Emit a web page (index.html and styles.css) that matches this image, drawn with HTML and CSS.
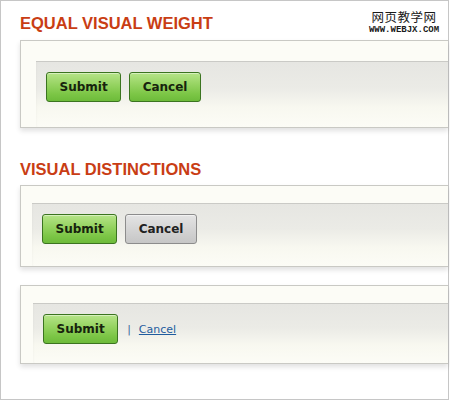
FILE: index.html
```html
<!DOCTYPE html>
<html>
<head>
<meta charset="utf-8">
<link rel="stylesheet" href="styles.css">
</head>
<body>
<div class="frame">
  <div class="watermark">
    <div class="wm-cn">网页教学网</div>
    <div class="wm-url">WWW.WEBJX.COM</div>
  </div>
  <h2 class="heading">EQUAL VISUAL WEIGHT</h2>
  <div class="panel panel-a">
    <div class="bar bar-a">
      <button class="btn btn-green">Submit</button>
      <button class="btn btn-green">Cancel</button>
    </div>
  </div>
  <h2 class="heading heading-2">VISUAL DISTINCTIONS</h2>
  <div class="panel panel-b">
    <div class="bar bar-b">
      <button class="btn btn-green">Submit</button>
      <button class="btn btn-gray">Cancel</button>
    </div>
  </div>
  <div class="panel panel-c">
    <div class="bar bar-c">
      <button class="btn btn-green">Submit</button>
      <span class="sep">|</span>
      <a class="link" href="#">Cancel</a>
    </div>
  </div>
</div>
</body>
</html>
```
FILE: styles.css
```css
html, body {
  margin: 0;
  padding: 0;
  background: #ffffff;
}

.frame {
  position: relative;
  box-sizing: border-box;
  width: 449px;
  height: 400px;
  border: 1px solid #c6c6c6;
  padding: 12px 0 0 19px;
  background: #ffffff;
}

.watermark {
  position: absolute;
  left: 367px;
  top: 7px;
  width: 72px;
  text-align: center;
  color: #1a1a1a;
}

.wm-cn {
  font-family: "Noto Sans CJK SC", sans-serif;
  font-size: 12.5px;
  line-height: 17px;
  letter-spacing: 0.5px;
}

.wm-url {
  font-family: "Liberation Mono", monospace;
  font-weight: bold;
  font-size: 9px;
  line-height: 9px;
  margin-top: 1px;
}

.heading {
  margin: 0 0 7px 0;
  font-family: "Liberation Sans", Arial, sans-serif;
  font-weight: bold;
  font-size: 16.5px;
  line-height: 20px;
  color: #c93d14;
}

.heading-2 {
  margin-top: 31px;
  margin-bottom: 6px;
}

.panel {
  border: 1px solid #c9c9c4;
  border-right: none;
  background: #fcfcf6;
  box-shadow: 0 3px 5px rgba(0, 0, 0, 0.12);
}

.panel-a {
  padding: 20px 0 0 15px;
}

.panel-b {
  padding: 17px 0 0 11px;
}

.panel-c {
  margin-top: 18px;
  padding: 17px 0 0 12px;
}

.bar {
  display: flex;
  align-items: center;
  gap: 8px;
  border-top: 1px solid #cacac6;
  padding: 10px 0 0 10px;
  background: linear-gradient(#e6e6e2 0%, #ebebe6 40%, #f8f8f0 70%, #fcfcf6 100%);
  box-shadow: inset 2px 0 3px -2px rgba(0, 0, 0, 0.05);
}

.bar-a {
  padding-bottom: 25px;
}

.bar-b {
  padding-bottom: 22px;
}

.bar-c {
  padding-bottom: 19px;
}

.btn {
  box-sizing: border-box;
  height: 30px;
  padding: 0 12.5px;
  border-radius: 3px;
  font-family: "DejaVu Sans", Verdana, sans-serif;
  font-weight: bold;
  font-size: 12px;
  line-height: 28px;
  cursor: pointer;
}

.btn-green {
  border: 1px solid #3b7420;
  color: #17230d;
  background: linear-gradient(#b6e489 0%, #97d463 40%, #7cc646 75%, #6dbb3a 100%);
  box-shadow: inset 0 1px 0 rgba(255, 255, 255, 0.45);
}

.btn-gray {
  border: 1px solid #8c8c8c;
  color: #222222;
  background: linear-gradient(#e4e4e4 0%, #d6d6d6 45%, #c6c6c6 100%);
  box-shadow: inset 0 1px 0 rgba(255, 255, 255, 0.5);
}

.sep {
  margin-left: 1px;
  font-family: "DejaVu Sans", Verdana, sans-serif;
  font-size: 11px;
  color: #3f6a9a;
}

.link {
  margin-left: 0;
  font-family: "DejaVu Sans", Verdana, sans-serif;
  font-size: 11px;
  color: #1f5c9e;
  text-decoration: underline;
}
```
